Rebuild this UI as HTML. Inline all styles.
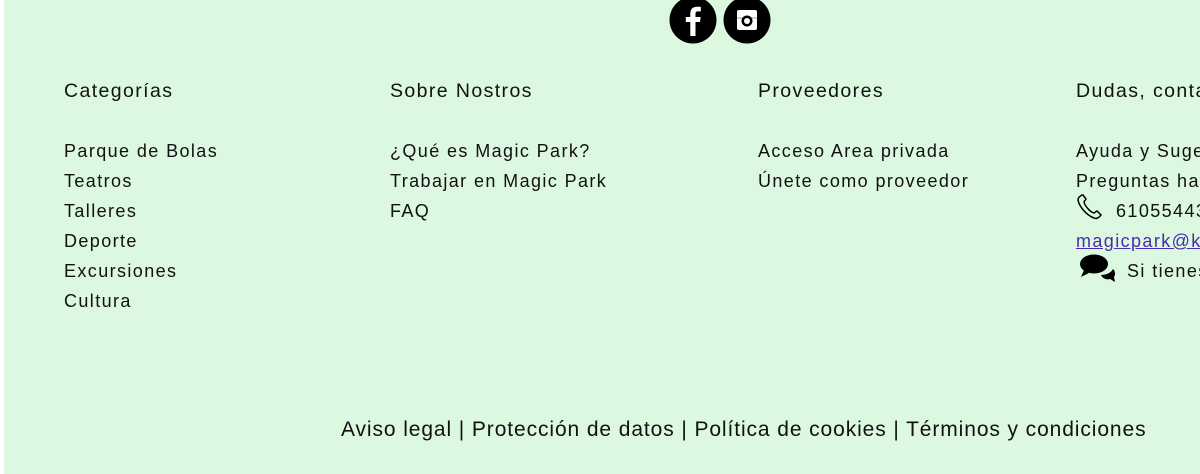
<!DOCTYPE html>
<html><head><style>
html,body{margin:0;width:1200px;height:474px;overflow:hidden;}
body{background:#fff;font-family:"Liberation Sans",sans-serif;color:#111;position:relative;}
.bg{position:absolute;left:4px;top:0;width:1196px;height:474px;background:#dcf8e0;}
.wrap{position:absolute;left:0;top:0;width:1200px;height:474px;overflow:hidden;}
.t{position:absolute;white-space:nowrap;font-size:18px;letter-spacing:1.4px;line-height:30px;}
.h{font-size:19.5px;letter-spacing:1.4px;}
a{color:#4a2bb0;text-decoration:underline;}
</style></head><body>
<div class="wrap">
<div class="bg"></div>
<svg style="position:absolute;left:669px;top:-4px" width="48" height="48" viewBox="0 0 48 48"><circle cx="24" cy="24" r="23.5" fill="#000"/><path d="M26.5 40V26h4.5l.7-5h-5.2v-3.2c0-1.5.5-2.4 2.5-2.4h2.8v-4.5c-.5-.1-2.1-.2-4-.2-4 0-6.5 2.4-6.5 6.8V21h-4.5v5h4.5v14z" fill="#fff"/></svg>
<svg style="position:absolute;left:723px;top:-4px" width="48" height="48" viewBox="0 0 48 48"><circle cx="24" cy="24" r="23.5" fill="#000"/><rect x="14" y="14" width="20" height="20" rx="2" fill="#fff"/><rect x="14" y="21" width="20" height="2" fill="#000" opacity=".2"/><circle cx="24" cy="25" r="5.5" fill="#000"/><circle cx="24" cy="25" r="3" fill="#fff"/></svg>
<div class="t h" style="left:64px;top:76px">Categorías</div>
<div class="t h" style="left:390px;top:76px">Sobre Nostros</div>
<div class="t h" style="left:758px;top:76px">Proveedores</div>
<div class="t h" style="left:1076px;top:76px">Dudas, contacto</div>
<div class="t" style="left:64px;top:136px">Parque de Bolas<br>Teatros<br>Talleres<br>Deporte<br>Excursiones<br>Cultura</div>
<div class="t" style="left:390px;top:136px">¿Qué es Magic Park?<br>Trabajar en Magic Park<br>FAQ</div>
<div class="t" style="left:758px;top:136px">Acceso Area privada<br>Únete como proveedor</div>
<div class="t" style="left:1076px;top:136px">Ayuda y Sugerencias<br>Preguntas habituales<br><span style="padding-left:40px">610554433</span><br><a>magicpark@kids.es</a><br><span style="padding-left:51px">Si tienes dudas</span></div>
<svg style="position:absolute;left:1076px;top:193px" width="30" height="28" viewBox="0 0 30 28"><path d="M6 2c-2 1-4 3-4 5 1 6 8 15 16 18 2 1 5 0 7-3l-4-4c-1 0-2 2-3 2-4-1-9-7-10-11 0-1 2-2 2-3L7 2z" fill="none" stroke="#000" stroke-width="1.5"/></svg>
<svg style="position:absolute;left:1079px;top:253px" width="38" height="30" viewBox="0 0 38 30"><ellipse cx="15" cy="11" rx="14" ry="9.5" fill="#000"/><path d="M5 17l-3 7 8-4z" fill="#000"/><path d="M22 22c5 0 10-2 12-6 2 2 3 5 1 8l1 5-5-3c-3 1-7 0-9-4z" fill="#000"/></svg>
<div class="t" style="left:341px;top:415px;font-size:21px;letter-spacing:0.9px">Aviso legal | Protección de datos | Política de cookies | Términos y condiciones</div>
</div>
</body></html>
